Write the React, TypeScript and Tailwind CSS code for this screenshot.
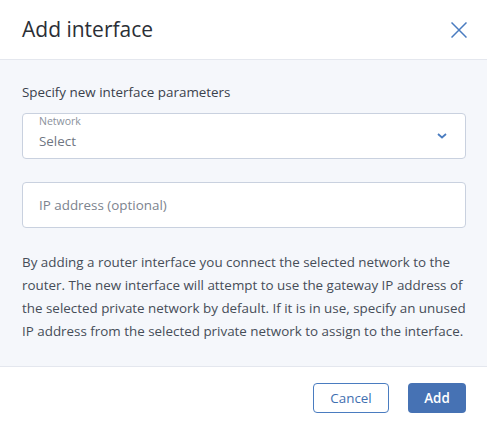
import React from 'react';

export default function App() {
  return (
    <div className="w-[487px] h-[423px] bg-white flex flex-col font-['Open_Sans',sans-serif]">
      <div className="h-[60px] shrink-0 flex items-center justify-between pl-[22px] pr-[20px] border-b border-[#e4e7ee]">
        <h1 className="text-[21px] text-[#2b2f36] leading-none">Add interface</h1>
        <button className="text-[#4a7cc0]">
          <svg width="16" height="16" viewBox="0 0 16 16" fill="none" stroke="currentColor" strokeWidth="1.5">
            <path d="M0.5 0.5L15.5 15.5M15.5 0.5L0.5 15.5" />
          </svg>
        </button>
      </div>
      <div className="flex-1 bg-[#f5f7fb] pl-[22px] pr-[21px] pt-[22px]">
        <p className="text-[13.4px] text-[#3a414c] leading-[20px]">Specify new interface parameters</p>
        <div className="mt-[11px] h-[46px] bg-white border border-[#c9d1df] rounded-[4px] flex items-center justify-between pl-[16px] pr-[18px]">
          <div className="flex flex-col self-start pt-[1px]">
            <span className="text-[10.5px] leading-[12px] text-[#8a919c]">Network</span>
            <span className="mt-[4px] text-[13.4px] leading-[20px] text-[#6f7682]">Select</span>
          </div>
          <svg width="10" height="6" viewBox="0 0 10 6" fill="none" stroke="#4a7cc0" strokeWidth="1.8">
            <path d="M1 1L5 4.5L9 1" />
          </svg>
        </div>
        <div className="mt-[23px] h-[46px] bg-white border border-[#c9d1df] rounded-[4px] flex items-center pl-[16px]">
          <span className="text-[13.4px] leading-[20px] text-[#7c838e]">IP address (optional)</span>
        </div>
        <p className="mt-[23px] -mr-[4px] text-[13.4px] leading-[23px] text-[#464d58]">
          By adding a router interface you connect the selected network to the router. The new interface will attempt to use the gateway IP address of the selected private network by default. If it is in use, specify an unused IP address from the selected private network to assign to the interface.
        </p>
      </div>
      <div className="h-[57px] shrink-0 border-t border-[#e4e7ee] flex items-start justify-end gap-[19px] pt-[16px] pr-[21px]">
        <button className="h-[30px] w-[76px] border border-[#4a7cc0] rounded-[4px] text-[13.4px] text-[#3f6fb0]">Cancel</button>
        <button className="h-[30px] w-[58px] bg-[#4672b4] rounded-[4px] text-[13.4px] font-semibold text-white">Add</button>
      </div>
    </div>
  );
}
